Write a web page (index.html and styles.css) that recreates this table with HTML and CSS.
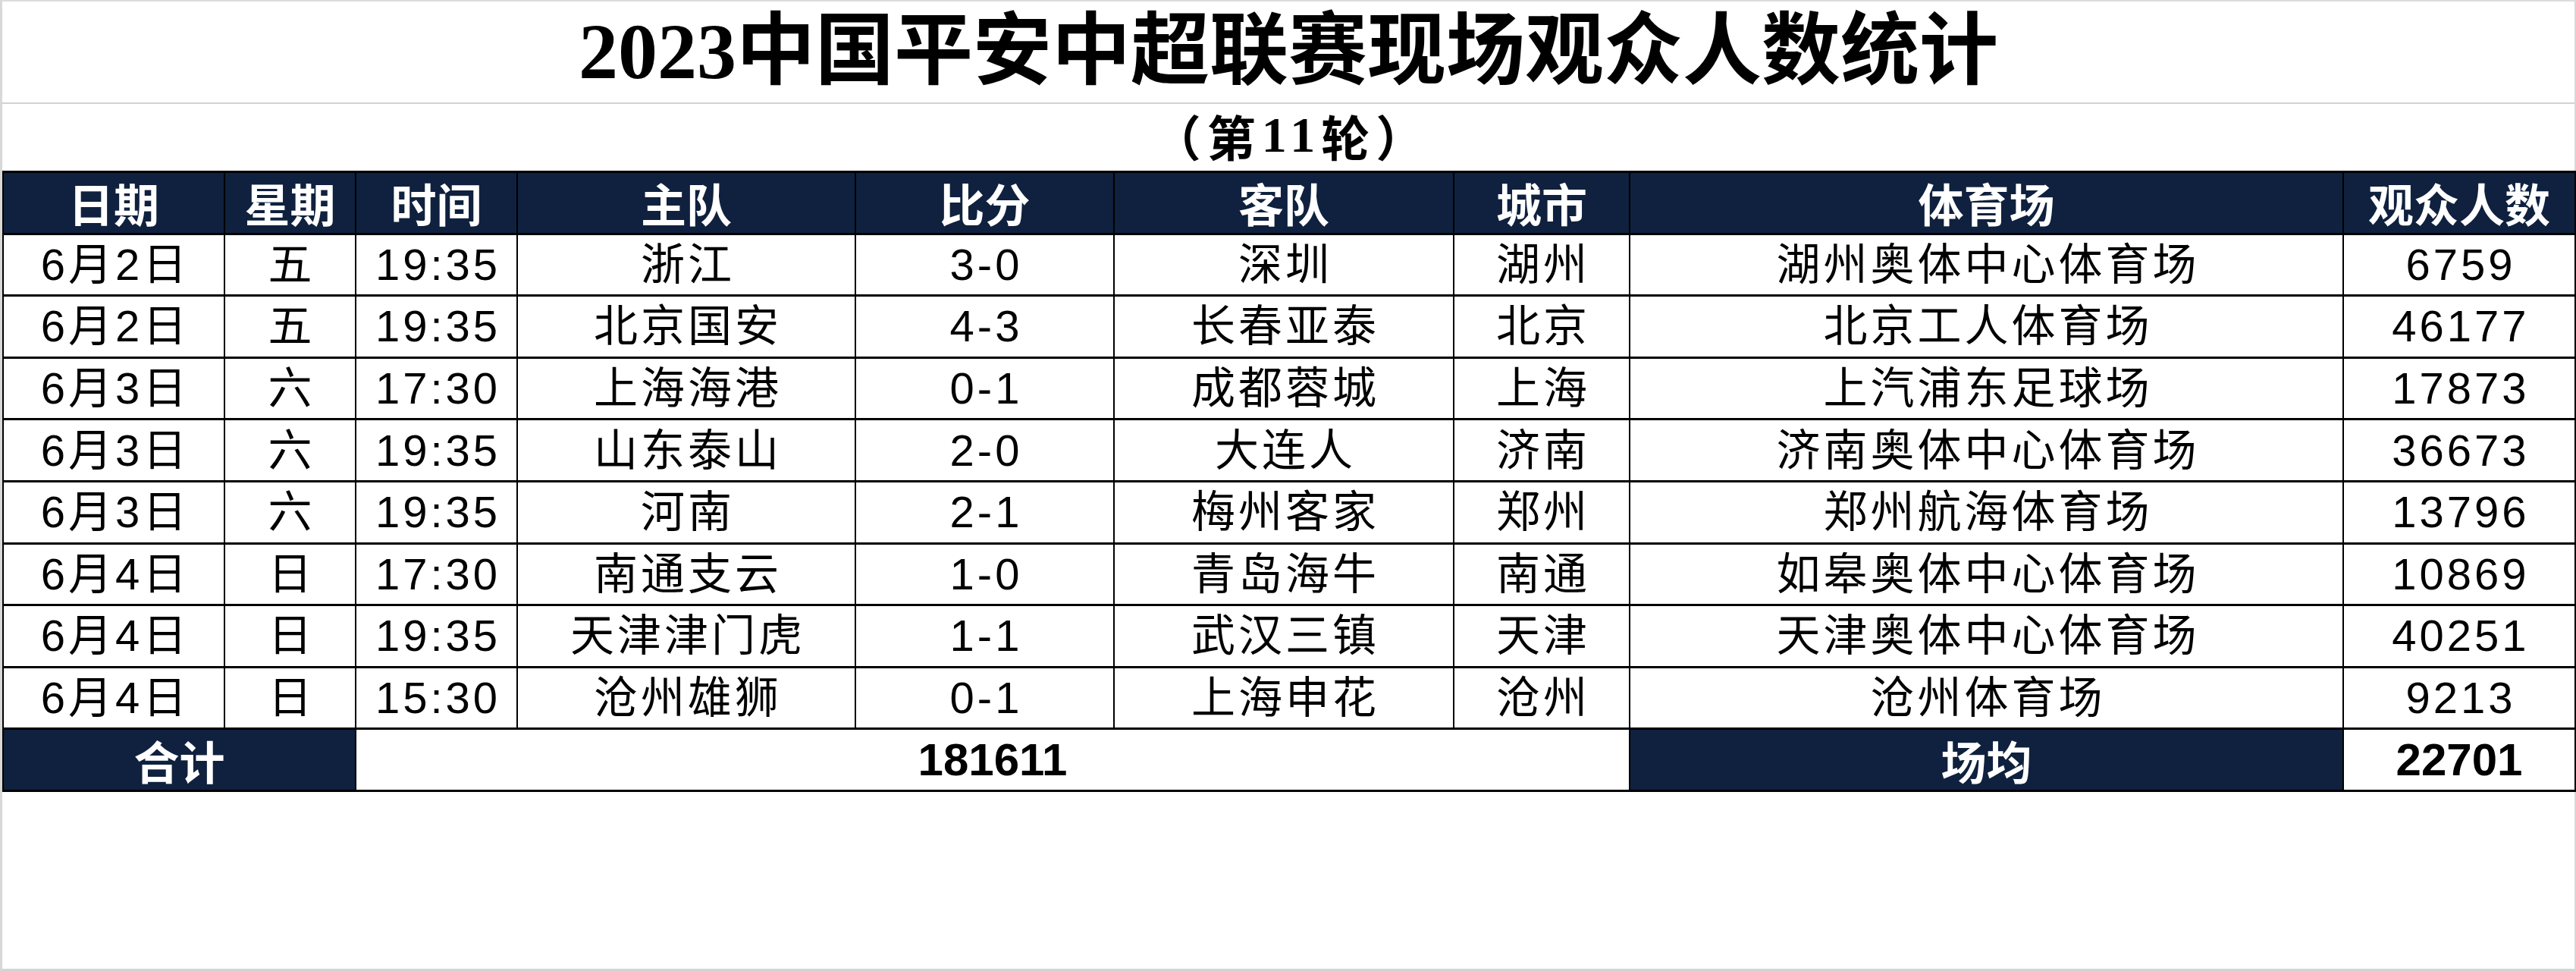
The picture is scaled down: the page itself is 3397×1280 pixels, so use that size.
FILE: index.html
```html
<!DOCTYPE html>
<html lang="zh-CN">
<head>
<meta charset="utf-8">
<title>2023中国平安中超联赛现场观众人数统计</title>
<link rel="stylesheet" href="styles.css">
</head>
<body>
<div class="sheet">
  <div class="title">2023中国平安中超联赛现场观众人数统计</div>
  <div class="subtitle">（第<span class="num">11</span>轮）</div>
  <table class="stats">
    <colgroup>
      <col class="c-date"><col class="c-week"><col class="c-time"><col class="c-home"><col class="c-score"><col class="c-away"><col class="c-city"><col class="c-venue"><col class="c-att">
    </colgroup>
    <thead>
      <tr class="head">
        <th>日期</th><th>星期</th><th>时间</th><th>主队</th><th>比分</th><th>客队</th><th>城市</th><th>体育场</th><th>观众人数</th>
      </tr>
    </thead>
    <tbody>
      <tr><td>6月2日</td><td>五</td><td>19:35</td><td>浙江</td><td>3-0</td><td>深圳</td><td>湖州</td><td>湖州奥体中心体育场</td><td>6759</td></tr>
      <tr><td>6月2日</td><td>五</td><td>19:35</td><td>北京国安</td><td>4-3</td><td>长春亚泰</td><td>北京</td><td>北京工人体育场</td><td>46177</td></tr>
      <tr><td>6月3日</td><td>六</td><td>17:30</td><td>上海海港</td><td>0-1</td><td>成都蓉城</td><td>上海</td><td>上汽浦东足球场</td><td>17873</td></tr>
      <tr><td>6月3日</td><td>六</td><td>19:35</td><td>山东泰山</td><td>2-0</td><td>大连人</td><td>济南</td><td>济南奥体中心体育场</td><td>36673</td></tr>
      <tr><td>6月3日</td><td>六</td><td>19:35</td><td>河南</td><td>2-1</td><td>梅州客家</td><td>郑州</td><td>郑州航海体育场</td><td>13796</td></tr>
      <tr><td>6月4日</td><td>日</td><td>17:30</td><td>南通支云</td><td>1-0</td><td>青岛海牛</td><td>南通</td><td>如皋奥体中心体育场</td><td>10869</td></tr>
      <tr><td>6月4日</td><td>日</td><td>19:35</td><td>天津津门虎</td><td>1-1</td><td>武汉三镇</td><td>天津</td><td>天津奥体中心体育场</td><td>40251</td></tr>
      <tr><td>6月4日</td><td>日</td><td>15:30</td><td>沧州雄狮</td><td>0-1</td><td>上海申花</td><td>沧州</td><td>沧州体育场</td><td>9213</td></tr>
    </tbody>
    <tfoot>
      <tr class="total">
        <th colspan="2">合计</th>
        <td colspan="5" class="sum">181611</td>
        <th>场均</th>
        <td class="sum">22701</td>
      </tr>
    </tfoot>
  </table>
</div>
</body>
</html>
```
FILE: styles.css
```css
html, body {
  margin: 0;
  padding: 0;
  background: #ffffff;
}

.sheet {
  box-sizing: border-box;
  width: 3397px;
  height: 1280px;
  border-top: 2px solid #dcdcdc;
  border-left: 3px solid #d8d8d8;
  border-right: 2px solid #d8d8d8;
  border-bottom: 3px solid #d4d4d4;
  background: #ffffff;
  display: flex;
  flex-direction: column;
}

.title {
  height: 131px;
  border-bottom: 2px solid #d2d2d2;
  display: flex;
  align-items: center;
  justify-content: center;
  font-family: "Liberation Serif", "Noto Sans CJK SC", serif;
  font-weight: 700;
  font-size: 104px;
  line-height: 1;
  color: #000;
  padding-bottom: 2px;
}

.subtitle {
  height: 88px;
  display: flex;
  align-items: center;
  justify-content: center;
  font-family: "Noto Sans CJK SC", sans-serif;
  font-weight: 700;
  font-size: 64px;
  letter-spacing: 8px;
  padding-left: 8px;
  line-height: 1;
  color: #000;
  padding-bottom: 6px;
  box-sizing: border-box;
  text-spacing-trim: space-all;
}

.subtitle .num {
  font-family: "Liberation Serif", serif;
  font-size: 66px;
}

.stats {
  width: 3392px;
  border-collapse: collapse;
  table-layout: fixed;
}

.c-date { width: 292px; }
.c-week { width: 173px; }
.c-time { width: 213px; }
.c-home { width: 446px; }
.c-score { width: 341px; }
.c-away { width: 448px; }
.c-city { width: 232px; }
.c-venue { width: 941px; }
.c-att { width: 306px; }

.stats th,
.stats td {
  height: 78.6px;
  padding: 0;
  text-align: center;
  vertical-align: middle;
  border-top: 3px solid #000;
  border-bottom: 3px solid #000;
  border-left: 2px solid #000;
  border-right: 2px solid #000;
  line-height: 1;
}

.stats th {
  background: #0f213e;
  color: #ffffff;
  font-family: "Noto Sans CJK SC", "Liberation Sans", sans-serif;
  font-weight: 700;
  font-size: 60px;
}

.stats tbody td {
  font-family: "Liberation Sans", "Noto Sans CJK SC", sans-serif;
  font-weight: 400;
  font-size: 58px;
  letter-spacing: 4px;
  text-indent: 4px;
  color: #000;
}

.stats .sum {
  font-family: "Liberation Sans", "Noto Sans CJK SC", sans-serif;
  font-weight: 700;
  font-size: 60px;
  color: #000;
  background: #ffffff;
}
```
